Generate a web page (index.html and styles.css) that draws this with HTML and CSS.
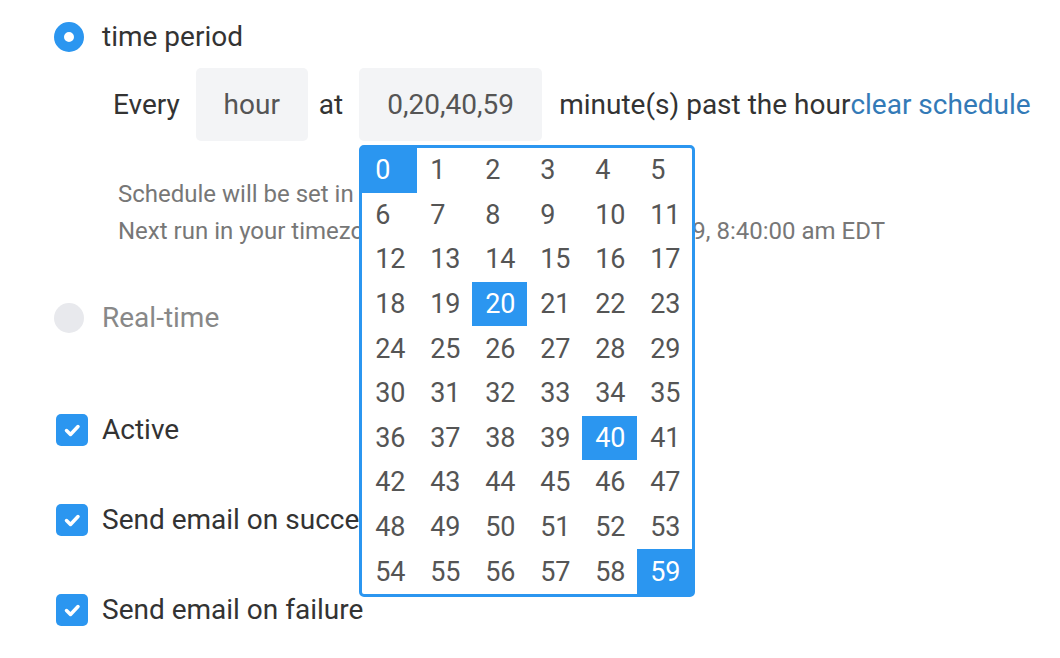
FILE: index.html
```html
<!DOCTYPE html>
<html lang="en">
<head>
  <meta charset="UTF-8">
  <meta name="viewport" content="width=device-width, initial-scale=1.0">
  <title>Job schedule</title>
  <link rel="stylesheet" href="styles.css">
</head>
<body>
  <div class="settings">
    <label class="option">
      <span class="radio radio-on"></span>
      <span class="option-text">time period</span>
    </label>

    <div class="schedule">
      <span class="word">Every</span>
      <span class="field field-unit">hour</span>
      <span class="word word-at">at</span>
      <div class="picker">
        <span class="field field-minutes">0,20,40,59</span>
        <div class="minute-menu">
          <div class="cell on">0</div><div class="cell">1</div><div class="cell">2</div><div class="cell">3</div><div class="cell">4</div><div class="cell">5</div>
          <div class="cell">6</div><div class="cell">7</div><div class="cell">8</div><div class="cell">9</div><div class="cell">10</div><div class="cell">11</div>
          <div class="cell">12</div><div class="cell">13</div><div class="cell">14</div><div class="cell">15</div><div class="cell">16</div><div class="cell">17</div>
          <div class="cell">18</div><div class="cell">19</div><div class="cell on">20</div><div class="cell">21</div><div class="cell">22</div><div class="cell">23</div>
          <div class="cell">24</div><div class="cell">25</div><div class="cell">26</div><div class="cell">27</div><div class="cell">28</div><div class="cell">29</div>
          <div class="cell">30</div><div class="cell">31</div><div class="cell">32</div><div class="cell">33</div><div class="cell">34</div><div class="cell">35</div>
          <div class="cell">36</div><div class="cell">37</div><div class="cell">38</div><div class="cell">39</div><div class="cell on">40</div><div class="cell">41</div>
          <div class="cell">42</div><div class="cell">43</div><div class="cell">44</div><div class="cell">45</div><div class="cell">46</div><div class="cell">47</div>
          <div class="cell">48</div><div class="cell">49</div><div class="cell">50</div><div class="cell">51</div><div class="cell">52</div><div class="cell">53</div>
          <div class="cell">54</div><div class="cell">55</div><div class="cell">56</div><div class="cell">57</div><div class="cell">58</div><div class="cell on">59</div>
        </div>
      </div>
      <span class="word word-tail">minute(s) past the hour</span><a class="clear" href="#">clear schedule</a>
    </div>

    <div class="hint">
      <div>Schedule will be set in UTC timezone.</div>
      <div>Next run in your timezone: Wednesday, June 26th, 2019, 8:40:00 am EDT</div>
    </div>

    <label class="option option-realtime">
      <span class="radio"></span>
      <span class="option-text muted">Real-time</span>
    </label>

    <label class="check-row check-first">
      <span class="checkbox"><svg viewBox="0 0 32 32" width="32" height="32"><path d="M10.5 16.5 L14.5 20.5 L22 12.5"/></svg></span>
      <span class="option-text">Active</span>
    </label>
    <label class="check-row">
      <span class="checkbox"><svg viewBox="0 0 32 32" width="32" height="32"><path d="M10.5 16.5 L14.5 20.5 L22 12.5"/></svg></span>
      <span class="option-text">Send email on success</span>
    </label>
    <label class="check-row">
      <span class="checkbox"><svg viewBox="0 0 32 32" width="32" height="32"><path d="M10.5 16.5 L14.5 20.5 L22 12.5"/></svg></span>
      <span class="option-text">Send email on failure</span>
    </label>
  </div>
</body>
</html>
```

FILE: styles.css
```css
body {
  margin: 0;
  background-color: white;
  font-family: Roboto, "Liberation Sans", sans-serif;
  color: #333;
  overflow: hidden;
}
.settings {
  padding: 22px 0 0 54px;
}
.option, .check-row {
  display: flex;
  align-items: center;
  font-size: 28px;
  line-height: 30px;
}
.check-row {
  line-height: 32px;
}
.option-text {
  margin-left: 18px;
}
.muted {
  color: #888;
}
.radio {
  box-sizing: border-box;
  width: 30px;
  height: 30px;
  border-radius: 50%;
  background-color: #e8e9ed;
}
.radio-on {
  background-color: white;
  border: 10px solid #2b96f0;
}
.schedule {
  display: flex;
  align-items: center;
  margin: 16px 0 0 59px;
  font-size: 28px;
  white-space: nowrap;
}
.field {
  display: flex;
  align-items: center;
  justify-content: center;
  height: 73px;
  background-color: #f3f4f6;
  border-radius: 5px;
  color: #555;
}
.field-unit {
  width: 112px;
  margin: 0 11px 0 16px;
}
.field-minutes {
  width: 183px;
}
.word-at {
  margin-right: 16px;
}
.word-tail {
  margin-left: 17px;
}
.clear {
  color: #337ab7;
  text-decoration: none;
}
.picker {
  position: relative;
}
.minute-menu {
  position: absolute;
  top: 77px;
  left: 0;
  z-index: 2;
  width: 330px;
  height: 446px;
  display: grid;
  grid-template-columns: repeat(6, 1fr);
  grid-template-rows: repeat(10, 1fr);
  border: 3px solid #2b96f0;
  border-radius: 5px;
  background-color: white;
}
.cell {
  display: flex;
  align-items: center;
  padding-left: 13px;
  color: #555;
  font-size: 27px;
}
.cell.on {
  background-color: #2b96f0;
  color: white;
}
.hint {
  margin: 35px 0 0 64px;
  font-size: 24px;
  line-height: 37px;
  color: #777;
  white-space: nowrap;
}
.option-realtime {
  margin-top: 53px;
}
.check-row {
  margin-top: 58px;
}
.check-first {
  margin-top: 81px;
}
.checkbox {
  width: 32px;
  height: 32px;
  margin-left: 2px;
  border-radius: 5px;
  background-color: #2b96f0;
}
.checkbox svg {
  display: block;
  fill: none;
  stroke: white;
  stroke-width: 3.5;
  stroke-linecap: round;
  stroke-linejoin: round;
}
.check-row .option-text {
  margin-left: 14px;
}
```
